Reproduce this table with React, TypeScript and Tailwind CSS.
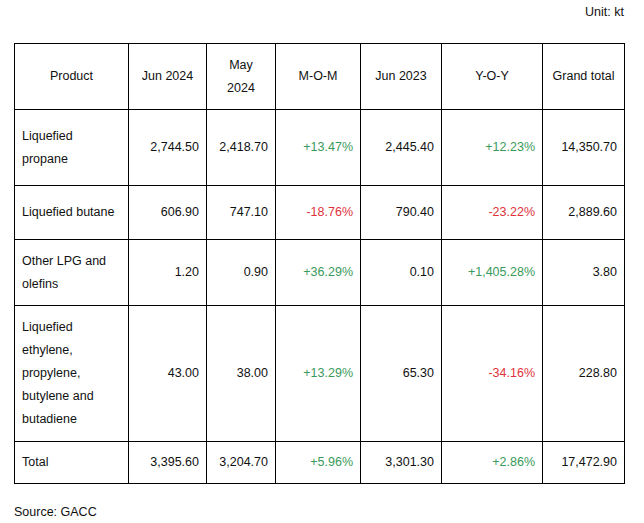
import React from "react";

type Cell = { v: string; c?: "g" | "r" };
type Row = { name: string[]; h: number; cells: Cell[] };

const rows: Row[] = [
  {
    name: ["Liquefied", "propane"],
    h: 76,
    cells: [{ v: "2,744.50" }, { v: "2,418.70" }, { v: "+13.47%", c: "g" }, { v: "2,445.40" }, { v: "+12.23%", c: "g" }, { v: "14,350.70" }],
  },
  {
    name: ["Liquefied butane"],
    h: 54,
    cells: [{ v: "606.90" }, { v: "747.10" }, { v: "-18.76%", c: "r" }, { v: "790.40" }, { v: "-23.22%", c: "r" }, { v: "2,889.60" }],
  },
  {
    name: ["Other LPG and", "olefins"],
    h: 66,
    cells: [{ v: "1.20" }, { v: "0.90" }, { v: "+36.29%", c: "g" }, { v: "0.10" }, { v: "+1,405.28%", c: "g" }, { v: "3.80" }],
  },
  {
    name: ["Liquefied", "ethylene,", "propylene,", "butylene and", "butadiene"],
    h: 136,
    cells: [{ v: "43.00" }, { v: "38.00" }, { v: "+13.29%", c: "g" }, { v: "65.30" }, { v: "-34.16%", c: "r" }, { v: "228.80" }],
  },
  {
    name: ["Total"],
    h: 42,
    cells: [{ v: "3,395.60" }, { v: "3,204.70" }, { v: "+5.96%", c: "g" }, { v: "3,301.30" }, { v: "+2.86%", c: "g" }, { v: "17,472.90" }],
  },
];

export default function App() {
  return (
    <div
      className="relative w-[644px] h-[523px] bg-white text-[#111] text-[12.5px] leading-[23px]"
      style={{ fontFamily: '"Liberation Sans", Arial, sans-serif' }}
    >
      <div className="flex justify-end pr-[20px] pt-[1px] h-[43px]">
        <span>Unit: kt</span>
      </div>
      <table className="ml-[14px] w-[610px] table-fixed border-collapse">
        <colgroup>
          <col className="w-[114px]" />
          <col className="w-[78px]" />
          <col className="w-[69px]" />
          <col className="w-[85px]" />
          <col className="w-[81px]" />
          <col className="w-[101px]" />
          <col className="w-[82px]" />
        </colgroup>
        <thead>
          <tr className="h-[66px]">
            {[["Product"], ["Jun 2024"], ["May", "2024"], ["M-O-M"], ["Jun 2023"], ["Y-O-Y"], ["Grand total"]].map((h, i) => (
              <th key={i} className="border border-black font-normal text-center align-middle px-[7px] py-0">
                {h.map((l, j) => (
                  <div key={j}>{l}</div>
                ))}
              </th>
            ))}
          </tr>
        </thead>
        <tbody>
          {rows.map((r, i) => (
            <tr key={i} style={{ height: r.h }}>
              <td className="border border-black align-middle text-left px-[7px] py-0">
                {r.name.map((l, j) => (
                  <div key={j}>{l}</div>
                ))}
              </td>
              {r.cells.map((c, j) => (
                <td
                  key={j}
                  className={
                    "border border-black align-middle text-right px-[7px] py-0 " +
                    (c.c === "g" ? "text-[#3a9a5b]" : c.c === "r" ? "text-[#e0323c]" : "")
                  }
                >
                  {c.v}
                </td>
              ))}
            </tr>
          ))}
        </tbody>
      </table>
      <div className="ml-[14px] mt-[17px]">Source: GACC</div>
    </div>
  );
}
